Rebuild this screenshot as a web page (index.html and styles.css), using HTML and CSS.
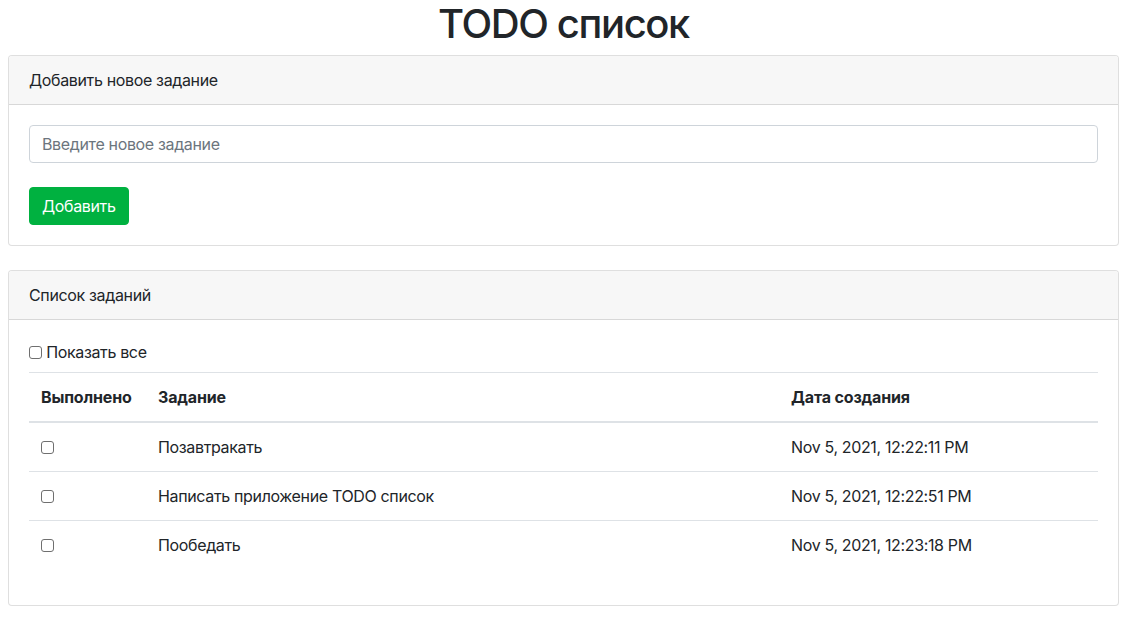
FILE: index.html
```html
<!DOCTYPE html>
<html lang="ru">
<head>
<meta charset="utf-8">
<title>TODO список</title>
<link rel="stylesheet" href="styles.css">
</head>
<body>
<h1 class="title">TODO список</h1>

<div class="card">
  <div class="card-header">Добавить новое задание</div>
  <div class="card-body">
    <input class="form-control" type="text" placeholder="Введите новое задание">
    <button class="btn-success" type="button">Добавить</button>
  </div>
</div>

<div class="card card-list">
  <div class="card-header">Список заданий</div>
  <div class="card-body">
    <label class="show-all"><input type="checkbox" class="chk"> Показать все</label>
    <table class="table">
      <thead>
        <tr>
          <th class="col-done">Выполнено</th>
          <th>Задание</th>
          <th class="col-date">Дата создания</th>
        </tr>
      </thead>
      <tbody>
        <tr>
          <td><input type="checkbox" class="chk"></td>
          <td>Позавтракать</td>
          <td>Nov 5, 2021, 12:22:11 PM</td>
        </tr>
        <tr>
          <td><input type="checkbox" class="chk"></td>
          <td>Написать приложение TODO список</td>
          <td>Nov 5, 2021, 12:22:51 PM</td>
        </tr>
        <tr>
          <td><input type="checkbox" class="chk"></td>
          <td>Пообедать</td>
          <td>Nov 5, 2021, 12:23:18 PM</td>
        </tr>
      </tbody>
    </table>
  </div>
</div>
</body>
</html>
```

FILE: styles.css
```css
* { box-sizing: border-box; }

body {
  margin: 0 8px;
  font-family: Inter, "Liberation Sans", "Noto Sans", sans-serif;
  font-size: 16px;
  line-height: 1.5;
  letter-spacing: -0.35px;
  color: #212529;
  background: #fff;
}

.title {
  margin: 0 0 7px;
  font-size: 40px;
  font-weight: 500;
  line-height: 1.2;
  letter-spacing: -1.4px;
  text-align: center;
}

.card {
  border: 1px solid rgba(0,0,0,.125);
  border-radius: 4px;
  background: #fff;
  overflow: hidden;
}

.card-list { margin-top: 24px; }

.card-header {
  padding: 12px 20px;
  background: #f7f7f7;
  border-bottom: 1px solid rgba(0,0,0,.125);
}

.card-body {
  padding: 20px;
}

.form-control {
  display: block;
  width: 100%;
  height: 38px;
  padding: 6px 12px;
  font: inherit;
  letter-spacing: inherit;
  color: #495057;
  border: 1px solid #ced4da;
  border-radius: 4px;
  background: #fff;
  margin: 0 0 24px;
}
.form-control::placeholder { color: #6c757d; }

.btn-success {
  display: block;
  height: 38px;
  padding: 6px 12px;
  font: inherit;
  letter-spacing: inherit;
  color: #fff;
  background: #00b140;
  border: 1px solid #00b140;
  border-radius: 4px;
}

.chk {
  appearance: none;
  -webkit-appearance: none;
  width: 13px;
  height: 13px;
  margin: 0;
  border: 1px solid #6f6f6f;
  border-radius: 3px;
  background: #fff;
  vertical-align: -1px;
}

.show-all {
  display: block;
  margin-bottom: 8px;
}

.table {
  width: 100%;
  border-collapse: collapse;
  margin-bottom: 16px;
}
.table th, .table td {
  padding: 12px;
  text-align: left;
  vertical-align: top;
  border-top: 1px solid #dee2e6;
}
.table th { font-weight: 700; letter-spacing: -0.15px; }
.table thead th { border-bottom: 2px solid #dee2e6; }
.col-done { width: 117px; }
.col-date { width: 319px; }
```
